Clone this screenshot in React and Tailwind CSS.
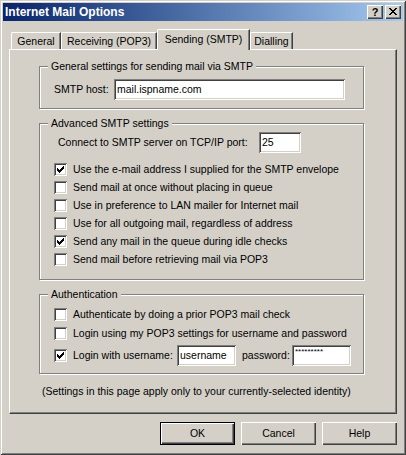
const sunken =
  'shadow-[inset_1px_1px_#808080,inset_-1px_-1px_#fff,inset_2px_2px_#404040,inset_-2px_-2px_#d4d0c8]'
const raised = 'shadow-[inset_1px_1px_#fff,inset_-1px_-1px_#404040,inset_-2px_-2px_#808080]'

// classic 7x7 check glyph
const CHECK = [
  [6, 0], [5, 1], [6, 1], [0, 2], [4, 2], [5, 2], [6, 2],
  [0, 3], [1, 3], [3, 3], [4, 3], [5, 3], [0, 4], [1, 4], [2, 4], [3, 4], [4, 4],
  [1, 5], [2, 5], [3, 5], [2, 6],
]

const CLOSE = [
  [0, 0], [1, 0], [6, 0], [7, 0], [1, 1], [2, 1], [5, 1], [6, 1],
  [2, 2], [3, 2], [4, 2], [5, 2], [3, 3], [4, 3],
  [2, 4], [3, 4], [4, 4], [5, 4], [1, 5], [2, 5], [5, 5], [6, 5],
  [0, 6], [1, 6], [6, 6], [7, 6],
]

function Pixels({ pts, w, h }) {
  return (
    <svg width={w} height={h} viewBox={`0 0 ${w} ${h}`} shapeRendering="crispEdges">
      {pts.map(([x, y]) => (
        <rect key={`${x}-${y}`} x={x} y={y} width="1" height="1" fill="#000" />
      ))}
    </svg>
  )
}

function Box({ checked }) {
  return (
    <div className={`flex h-[13px] w-[13px] shrink-0 items-center justify-center bg-white ${sunken}`}>
      {checked && <Pixels pts={CHECK} w={7} h={7} />}
    </div>
  )
}

function Check({ checked, children }) {
  return (
    <div className="flex h-[18px] items-center pl-[14px]">
      <Box checked={checked} />
      <span className="ml-[6px] whitespace-nowrap">{children}</span>
    </div>
  )
}

function Field({ value, className }) {
  return (
    <div className={`flex h-[21px] shrink-0 items-center bg-white pl-[3px] ${sunken} ${className}`}>
      {value}
    </div>
  )
}

function Group({ title, className, children }) {
  return (
    <div
      className={`relative w-[325px] border border-[#808080] shadow-[inset_1px_1px_#fff,1px_1px_#fff] ${className}`}
    >
      <span className="absolute left-[8px] top-[-7px] bg-[#d4d0c8] px-[3px] leading-[13px] whitespace-nowrap">
        {title}
      </span>
      {children}
    </div>
  )
}

function Tab({ label, width, active }) {
  return (
    <div
      className={`flex items-center justify-center rounded-tl-[2px] border-l border-t border-r border-l-white border-t-white border-r-[#404040] bg-[#d4d0c8] shadow-[inset_-1px_0_#808080] ${width} ${
        active ? 'relative z-10 -mb-px h-[21px] pb-[2px]' : 'h-[17px]'
      }`}
    >
      {label}
    </div>
  )
}

function Button({ label, primary }) {
  return (
    <button
      className={`flex h-[23px] w-[75px] items-center justify-center bg-[#d4d0c8] ${raised} ${
        primary ? 'border border-black' : ''
      }`}
    >
      {label}
    </button>
  )
}

export default function App() {
  return (
    <div className="h-[455px] w-[406px] bg-[#d4d0c8] p-[3px] font-['Liberation_Sans',Arial,sans-serif] text-[10.5px] leading-[13px] text-black shadow-[inset_1px_1px_#d4d0c8,inset_-1px_-1px_#404040,inset_2px_2px_#fff,inset_-2px_-2px_#808080]">
      {/* title bar */}
      <div className="flex h-[18px] items-center bg-gradient-to-r from-[#0a246a] to-[#a6caf0] pl-[2px] pr-[2px]">
        <span className="text-[12px] font-bold text-white">Internet Mail Options</span>
        <div className="ml-auto flex gap-[2px]">
          <div className={`flex h-[14px] w-[16px] items-center justify-center bg-[#d4d0c8] ${raised}`}>
            <span className="text-[11px] font-bold leading-none">?</span>
          </div>
          <div className={`flex h-[14px] w-[16px] items-center justify-center bg-[#d4d0c8] pb-px ${raised}`}>
            <Pixels pts={CLOSE} w={8} h={7} />
          </div>
        </div>
      </div>

      <div className="px-[6px] pt-[8px]">
        {/* tabs */}
        <div className="flex items-end pl-[2px]">
          <Tab label="General" width="w-[50px]" />
          <Tab label="Receiving (POP3)" width="w-[96px]" />
          <Tab label="Sending (SMTP)" width="w-[93px]" active />
          <Tab label="Dialling" width="w-[43px]" />
        </div>

        {/* page */}
        <div className="h-[365px] border-l border-t border-r border-b border-l-white border-t-white border-r-[#404040] border-b-[#404040] pl-[29px] pt-[16px] shadow-[inset_-1px_-1px_#808080]">
          <Group title="General settings for sending mail via SMTP" className="h-[43px]">
            <div className="flex items-center pl-[14px] pt-[12px]">
              <span className="w-[60px]">SMTP host:</span>
              <Field value="mail.ispname.com" className="w-[231px]" />
            </div>
          </Group>

          <Group title="Advanced SMTP settings" className="mt-[14px] h-[157px]">
            <div className="flex items-center pl-[18px] pt-[8px]">
              <span className="w-[201px] whitespace-nowrap">Connect to SMTP server on TCP/IP port:</span>
              <Field value="25" className="w-[42px]" />
            </div>
            <div className="mt-[7px]">
              <Check checked>Use the e-mail address I supplied for the SMTP envelope</Check>
              <Check>Send mail at once without placing in queue</Check>
              <Check>Use in preference to LAN mailer for Internet mail</Check>
              <Check>Use for all outgoing mail, regardless of address</Check>
              <Check checked>Send any mail in the queue during idle checks</Check>
              <Check>Send mail before retrieving mail via POP3</Check>
            </div>
          </Group>

          <Group title="Authentication" className="mt-[14px] h-[80px]">
            <div className="flex flex-col gap-[1px] pt-[10px]">
              <Check>Authenticate by doing a prior POP3 mail check</Check>
              <Check>Login using my POP3 settings for username and password</Check>
            </div>
            <div className="mt-[3px] flex h-[21px] items-center pl-[14px]">
              <Box checked />
              <span className="ml-[6px] w-[104px] whitespace-nowrap">Login with username:</span>
              <Field value="username" className="w-[59px]" />
              <span className="ml-[6px] w-[50px]">password:</span>
              <div className={`flex h-[21px] w-[59px] items-start bg-white pl-[3px] pt-[3px] text-[8px] leading-[8px] ${sunken}`}>
                *********
              </div>
            </div>
          </Group>

          <div className="mt-[11px] pl-[3px] whitespace-nowrap">
            (Settings in this page apply only to your currently-selected identity)
          </div>
        </div>

        {/* buttons */}
        <div className="mt-[8px] flex justify-end gap-[6px]">
          <Button label="OK" primary />
          <Button label="Cancel" />
          <Button label="Help" />
        </div>
      </div>
    </div>
  )
}
